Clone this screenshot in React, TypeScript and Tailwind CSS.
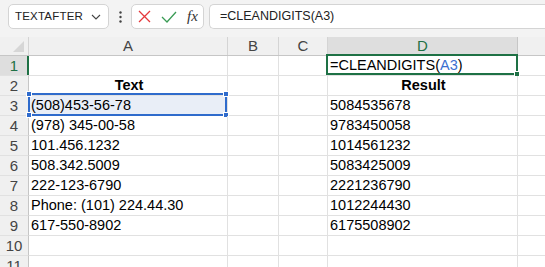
import { FC } from 'react';

const rows: [string, string][] = [
  ['', ''],
  ['Text', 'Result'],
  ['(508)453-56-78', '5084535678'],
  ['(978) 345-00-58', '9783450058'],
  ['101.456.1232', '1014561232'],
  ['508.342.5009', '5083425009'],
  ['222-123-6790', '2221236790'],
  ['Phone: (101) 224.44.30', '1012244430'],
  ['617-550-8902', '6175508902'],
  ['', ''],
  ['', ''],
];

const Handle: FC<{ className: string }> = ({ className }) => (
  <div className={`absolute w-[6px] h-[6px] bg-[#2f6bcc] border border-white ${className}`} />
);

const App: FC = () => {
  return (
    <div
      className="w-[545px] h-[267px] overflow-hidden bg-white text-black"
      style={{ fontFamily: '"Liberation Sans", Arial, sans-serif' }}
    >
      {/* formula bar */}
      <div className="h-[37px] bg-[#f3f3f3] flex items-start pt-[4px] pl-[8px]">
        <div className="w-[101px] h-[25px] bg-white border border-[#d4d4d4] rounded-[5px] flex items-center pl-[6px] pr-[6px] justify-between">
          <span className="text-[11.5px] text-[#222] tracking-[0.2px]">TEXTAFTER</span>
          <svg width="10" height="6" viewBox="0 0 10 6" className="mr-[1px]">
            <path d="M1 1l4 4 4-4" fill="none" stroke="#444" strokeWidth="1.1" />
          </svg>
        </div>
        <div className="w-[22px] h-[25px] flex items-center justify-center">
          <svg width="3" height="12" viewBox="0 0 3 12">
            <circle cx="1.5" cy="1.5" r="1.2" fill="#444" />
            <circle cx="1.5" cy="6" r="1.2" fill="#444" />
            <circle cx="1.5" cy="10.5" r="1.2" fill="#444" />
          </svg>
        </div>
        <div className="w-[73px] h-[25px] bg-white border border-[#d4d4d4] rounded-[5px] flex items-center pl-[6px] gap-[10px]">
          <svg width="13" height="13" viewBox="0 0 13 13">
            <path d="M1 1l11 11M12 1L1 12" stroke="#e5383b" strokeWidth="1.3" />
          </svg>
          <svg width="16" height="12" viewBox="0 0 16 12">
            <path d="M1 6l5 5L15 1" fill="none" stroke="#3a9b55" strokeWidth="1.3" />
          </svg>
          <span
            className="text-[15px] italic text-[#333] leading-none"
            style={{ fontFamily: '"Liberation Serif", "Times New Roman", serif' }}
          >
            fx
          </span>
        </div>
        <div className="flex-1 ml-[5px] h-[25px] bg-white border border-r-0 border-[#d4d4d4] rounded-l-[5px] flex items-center pl-[10px]">
          <span className="text-[12.5px] text-[#222]">=CLEANDIGITS(A3)</span>
        </div>
      </div>

      {/* column headers */}
      <div className="flex h-[19px] bg-[#f0f0f0] border-b border-[#c6c6c6] text-[15px] text-[#444] leading-[18px]">
        <div className="w-[29px] shrink-0 border-r border-[#d4d4d4] relative">
          <svg width="12" height="12" viewBox="0 0 12 12" className="absolute right-[3px] bottom-[2px]">
            <path d="M11 0v11H0z" fill="#d6d6d6" />
          </svg>
        </div>
        <div className="w-[199px] shrink-0 border-r border-[#d4d4d4] text-center">A</div>
        <div className="w-[51px] shrink-0 border-r border-[#d4d4d4] text-center">B</div>
        <div className="w-[49px] shrink-0 border-r border-[#d4d4d4] text-center">C</div>
        <div className="w-[190px] shrink-0 border-r border-[#c6c6c6] text-center bg-[#dedede] text-[#1e7145]">D</div>
        <div className="flex-1" />
      </div>

      {/* rows */}
      {rows.map(([a, d], i) => {
        const n = i + 1;
        const bold = n === 2;
        return (
          <div key={n} className="flex h-5 border-b border-[#e1e1e1] text-[14.5px] leading-[19px]">
            <div
              className={
                n === 1
                  ? 'w-[29px] shrink-0 bg-[#dedede] text-[#1e7145] border-r-2 border-[#1e7145] text-center text-[15px] pl-[1px]'
                  : 'w-[29px] shrink-0 bg-[#f0f0f0] text-[#444] border-r border-[#c6c6c6] text-center text-[15px] -mt-px border-t border-t-[#e1e1e1]'
              }
            >
              {n}
            </div>
            <div
              className={`w-[199px] shrink-0 border-r border-[#e1e1e1] pl-[2px] relative whitespace-nowrap ${
                bold ? 'font-bold text-center' : ''
              } ${n === 3 ? 'bg-[#e9eef7]' : ''}`}
            >
              {a}
              {n === 3 && (
                <div className="absolute -top-[3px] -bottom-[1px] -left-[1px] right-0 border-2 border-[#2f6bcc]">
                  <Handle className="-top-[4px] -left-[4px] w-[5px] h-[5px]" />
                  <Handle className="-top-[4px] -right-[4px]" />
                  <Handle className="-bottom-[4px] -left-[4px] w-[5px] h-[5px]" />
                  <Handle className="-bottom-[4px] -right-[4px]" />
                </div>
              )}
            </div>
            <div className="w-[51px] shrink-0 border-r border-[#e1e1e1]" />
            <div className="w-[49px] shrink-0 border-r border-[#e1e1e1]" />
            <div
              className={`w-[190px] shrink-0 border-r border-[#e1e1e1] pl-[2px] relative whitespace-nowrap ${
                bold ? 'font-bold text-center' : ''
              }`}
            >
              {n === 1 ? (
                <>
                  =CLEANDIGITS(<span className="text-[#3b6fd0]">A3</span>)
                  <div className="absolute -top-[2px] -left-[2px] -right-[1px] bottom-0 border-2 border-[#1e7145]">
                    <div className="absolute -bottom-[4px] -right-[4px] w-[6px] h-[6px] bg-[#1e7145] border border-white" />
                  </div>
                </>
              ) : (
                d
              )}
            </div>
            <div className="flex-1" />
          </div>
        );
      })}
    </div>
  );
};

export default App;
